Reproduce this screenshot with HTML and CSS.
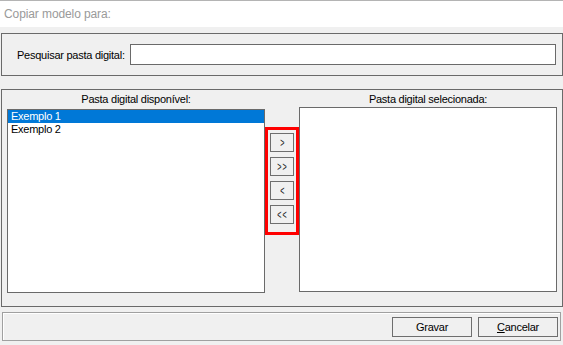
FILE: index.html
```html
<!DOCTYPE html>
<html lang="pt">
<head>
    <meta charset="UTF-8">
    <title>Copiar modelo para</title>
    <link rel="stylesheet" href="styles.css">
</head>
<body>
<div id="dialog">
    <div class="titlebar">Copiar modelo para:</div>
    <div class="main">
        <div class="group search">
            <label for="busca">Pesquisar pasta digital:</label>
            <input id="busca" type="text" class="search-input">
        </div>
        <div class="group transfer">
            <div class="column">
                <div class="column-title">Pasta digital disponível:</div>
                <ul class="list list-left">
                    <li class="selected">Exemplo 1</li>
                    <li>Exemplo 2</li>
                </ul>
            </div>
            <div class="actions">
                <div class="mark">
                    <button class="move"><span>&gt;</span></button>
                    <button class="move"><span>&gt;&gt;</span></button>
                    <button class="move"><span>&lt;</span></button>
                    <button class="move"><span>&lt;&lt;</span></button>
                </div>
            </div>
            <div class="column">
                <div class="column-title">Pasta digital selecionada:</div>
                <ul class="list list-right"></ul>
            </div>
        </div>
        <div class="footer">
            <button class="btn">Gravar</button>
            <button class="btn"><u>C</u>ancelar</button>
        </div>
    </div>
</div>
</body>
</html>
```

FILE: styles.css
```css
*{
    margin: 0;
    padding: 0;
    box-sizing: border-box;
}
li{
    list-style: none;
}
body{
    font-family: "Liberation Sans", Arial, sans-serif;
    font-size: 11px;
    letter-spacing: -0.25px;
    color: #000;
    background: #f0f0f0;
}
#dialog{
    width: 563px;
    height: 345px;
    background: #f0f0f0;
    overflow: hidden;
}
#dialog .titlebar{
    height: 27px;
    line-height: 26px;
    padding-left: 4px;
    background: #fff;
    border-top: 1px solid #b4b4b4;
    color: #9a9a9a;
    font-size: 12px;
    letter-spacing: -0.1px;
}
#dialog .group{
    margin-left: 1px;
    width: 562px;
    border: 1px solid #6a6a6a;
}
#dialog .search{
    margin-top: 6px;
    height: 43px;
    display: flex;
    align-items: center;
    padding: 0 6px 0 15px;
}
#dialog .search-input{
    flex: 1;
    height: 21px;
    margin-left: 5px;
    border: 1px solid #6a6a6a;
    background: #fff;
    outline: none;
}
#dialog .transfer{
    margin-top: 13px;
    height: 218px;
    display: grid;
    grid-template-columns: 258px 34px 258px;
    padding: 0 5px;
}
#dialog .column-title{
    height: 17px;
    line-height: 18px;
    text-align: center;
}
#dialog .list{
    background: #fff;
    border: 1px solid #6a6a6a;
}
#dialog .list-left{
    margin-top: 2px;
    height: 184px;
}
#dialog .list-right{
    height: 185px;
}
#dialog .list li{
    height: 13px;
    line-height: 13px;
    padding-left: 3px;
}
#dialog .list li.selected{
    background: #0078d7;
    color: #fff;
}
#dialog .actions{
    padding-top: 37px;
}
#dialog .mark{
    width: 34px;
    height: 108px;
    border: 3px solid #f00;
    padding-top: 3px;
    display: flex;
    flex-direction: column;
    align-items: center;
    gap: 5px;
}
#dialog .move{
    width: 24px;
    height: 19px;
    border: 1px solid #6e6e6e;
    background: #f0f0f0;
    font-family: inherit;
    font-size: 13px;
    line-height: 15px;
    font-weight: 300;
    color: #222;
}
#dialog .move span{
    display: inline-block;
    transform: scaleX(0.55);
    letter-spacing: 2px;
    margin-right: -2px;
}
#dialog .footer{
    margin: 5px 0 0 2px;
    width: 559px;
    height: 29px;
    border: 1px solid #a0a0a0;
    box-shadow: inset 1px 1px 0 #fff;
    display: flex;
    justify-content: flex-end;
    gap: 6px;
    padding: 4px 2px 0 0;
}
#dialog .btn{
    width: 80px;
    height: 20px;
    border: 1px solid #6e6e6e;
    background: #f0f0f0;
    font-family: inherit;
    font-size: 11px;
    letter-spacing: -0.25px;
    color: #000;
}
```
